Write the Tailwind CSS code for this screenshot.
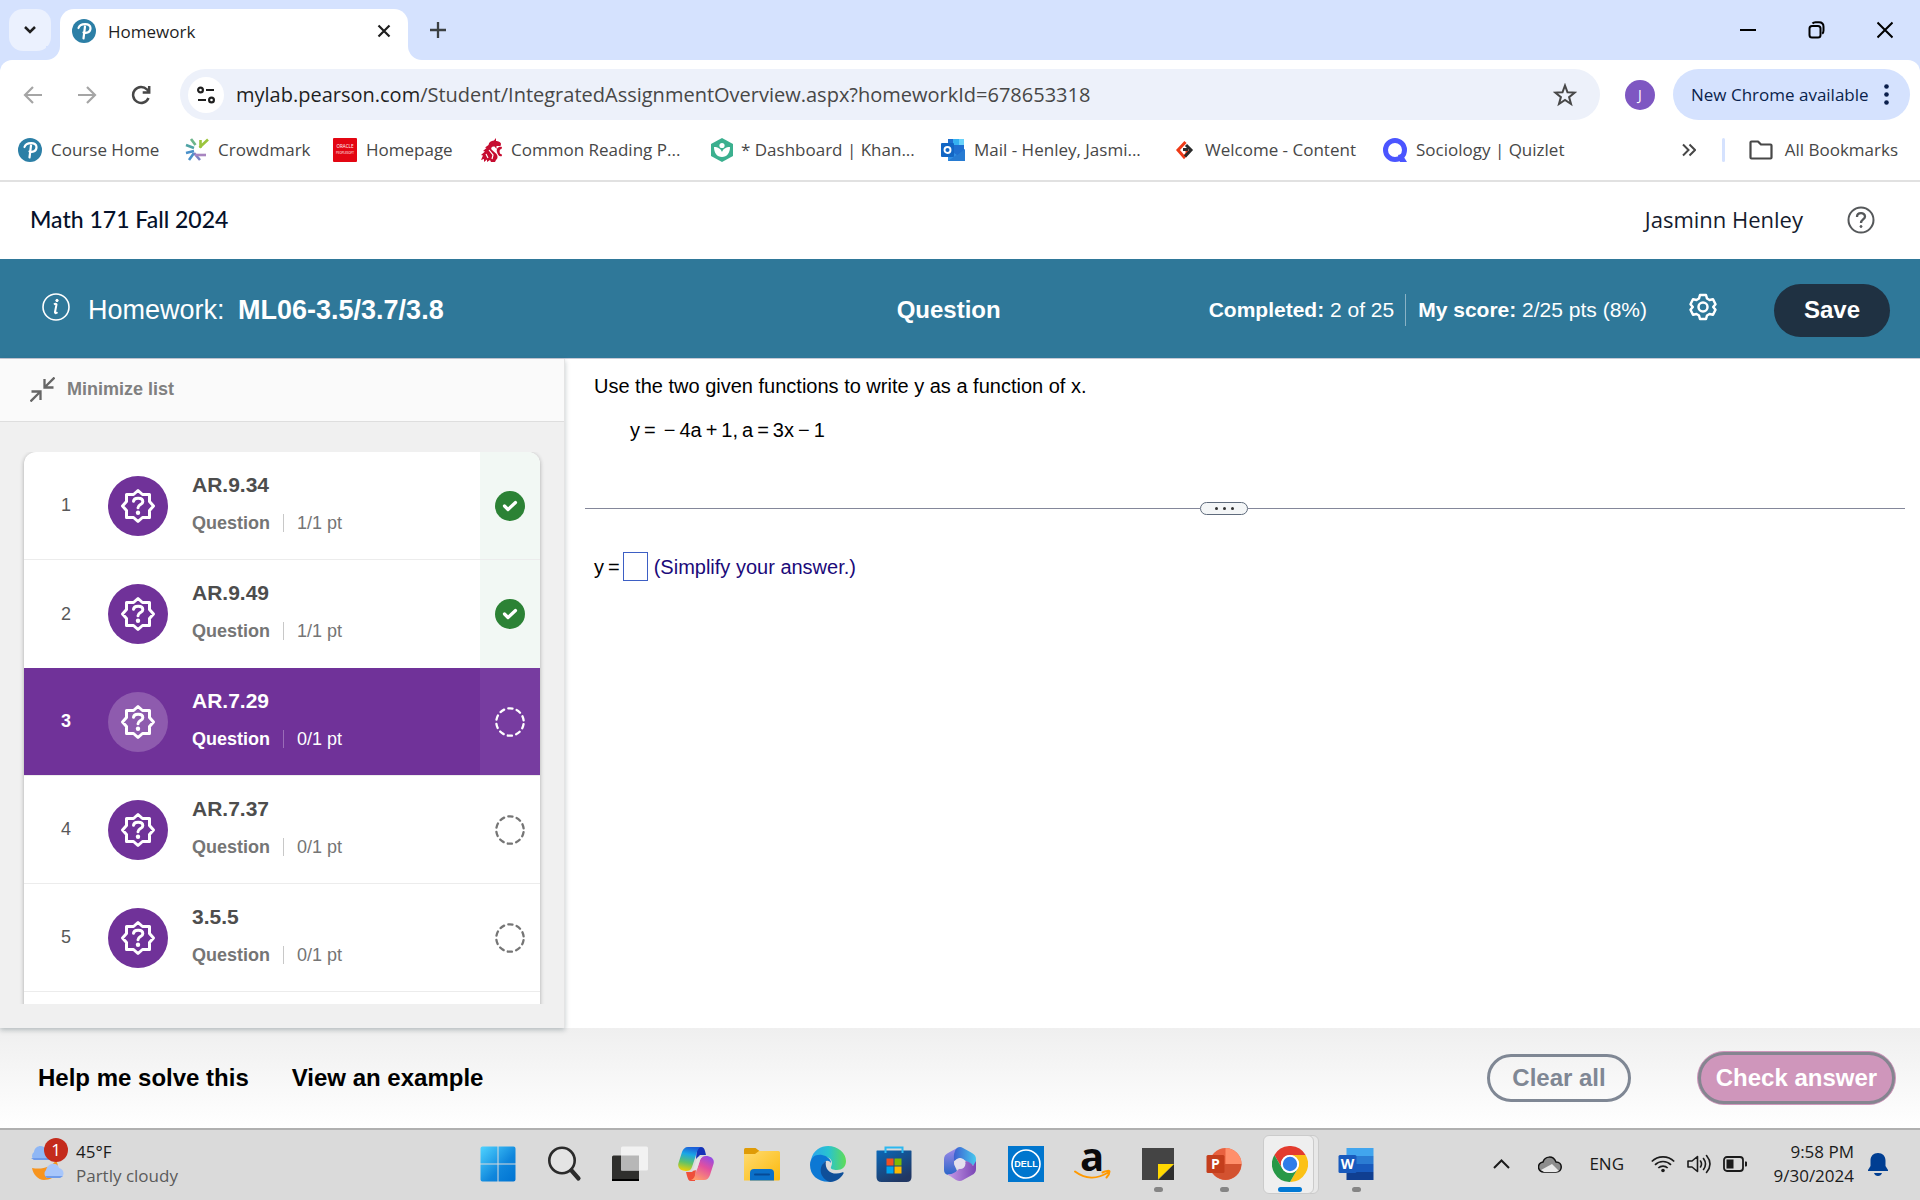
<!DOCTYPE html>
<html lang="en">
<head>
  <meta charset="UTF-8">
  <meta name="viewport" content="width=device-width, initial-scale=1.0">
  <title>Homework</title>
  <script src="https://cdn.jsdelivr.net/npm/@tailwindcss/browser@4"></script>
</head>
<body class="h-screen flex flex-col overflow-hidden bg-white font-['Liberation_Sans',Arial,sans-serif]">

  <!-- Shared icons -->
  <svg class="hidden">
    <symbol id="pearson" viewBox="0 0 24 24">
      <circle cx="12" cy="12" r="12" fill="#2c7fa6"/>
      <path d="M6.500 9C8 4 18.500 3.500 18.500 9c0 4.500-4 5.500-7 4.500M13 7.500 11.500 19.500" fill="none" stroke="#fff" stroke-width="2.200" stroke-linecap="round"/>
    </symbol>
    <symbol id="seal" viewBox="-18 -18 36 36">
      <path d="M0-15.500 4.500-11.500H11.500V-4.500L15.500 0 11.500 4.500V11.500H4.500L0 15.500-4.500 11.500H-11.500V4.500L-15.500 0-11.500-4.500V-11.500H-4.500Z" fill="none" stroke="currentColor" stroke-width="3" stroke-linejoin="round"/>
      <path d="M-4.500-4.800C-4-8.800 4.800-8.800 4.800-4.300 4.800-1.300 0-1.500 0 1.800" fill="none" stroke="currentColor" stroke-width="3" stroke-linecap="round"/>
      <circle cy="6.800" r="2.200" fill="currentColor"/>
    </symbol>
    <symbol id="done" viewBox="0 0 30 30">
      <circle cx="15" cy="15" r="15" fill="#2c8235"/>
      <path d="M9.500 15 13 18.500 20.500 11.500" fill="none" stroke="#fff" stroke-width="3.200" stroke-linecap="round" stroke-linejoin="round"/>
    </symbol>
    <symbol id="todo" viewBox="0 0 30 30">
      <circle cx="15" cy="15" r="13.700" fill="none" stroke="currentColor" stroke-width="2.300" stroke-linecap="round" stroke-dasharray="4.300 4.308" stroke-dashoffset="-2.150"/>
    </symbol>
  </svg>

  <!-- Browser chrome -->
  <header class="bg-[#d5e2fe] font-['Open_Sans','Noto_Sans',sans-serif]">
    <div class="h-[60px] flex items-end pl-[9px]">
      <button aria-label="Search tabs" class="size-[42px] mb-[9px] rounded-[14px] bg-[#ebf1fe] flex items-center justify-center">
        <svg class="size-4" viewBox="0 0 16 16" fill="none" stroke="#1f1f1f" stroke-width="2.500"><path d="m3 5 5 5 5-5"/></svg>
      </button>
      <div class="relative ml-[9px] w-[348px] h-[51px] rounded-t-[14px] bg-white flex items-center pl-3 pr-[17px] pb-2">
        <span class="absolute bottom-0 -left-[14px] size-[14px] bg-white"><span class="block size-full bg-[#d5e2fe] rounded-br-[14px]"></span></span>
        <span class="absolute bottom-0 -right-[14px] size-[14px] bg-white"><span class="block size-full bg-[#d5e2fe] rounded-bl-[14px]"></span></span>
        <svg class="size-6"><use href="#pearson"/></svg>
        <span class="ml-3 pt-[2px] text-[17px] text-[#1f1f1f]">Homework</span>
        <button aria-label="Close tab" class="ml-auto"><svg class="size-[14px]" viewBox="0 0 14 14" stroke="#1f1f1f" stroke-width="2.200"><path d="m1.500 1.500 11 11m0-11-11 11"/></svg></button>
      </div>
      <button aria-label="New tab" class="ml-[21px] mb-[21px]"><svg class="size-[18px]" viewBox="0 0 18 18" stroke="#3c4043" stroke-width="2.300"><path d="M9 1v16M1 9h16"/></svg></button>
      <div class="ml-auto mr-[27px] mb-[21px] flex items-center gap-[52px]">
        <button aria-label="Minimize"><svg class="w-4 h-[18px]" viewBox="0 0 16 18" stroke="#000" stroke-width="2"><path d="M0 9h16"/></svg></button>
        <button aria-label="Restore"><svg class="w-[17px] h-[18px]" viewBox="0 0 17 18" fill="none" stroke="#000" stroke-width="2"><rect x="1.500" y="5" width="11" height="11.500" rx="2.500"/><path d="M4.500 2.500c1-1.200 2-1.300 3-1.300h3.500c3 0 4.500 1.500 4.500 4.500v3.800c0 1.500-.300 2.500-1.300 3.300"/></svg></button>
        <button aria-label="Close"><svg class="w-4 h-[18px]" viewBox="0 0 16 18" stroke="#000" stroke-width="2"><path d="m.500 1.500 15 15m0-15-15 15"/></svg></button>
      </div>
    </div>

    <div class="bg-white rounded-t-xl pt-[9px] border-b-2 border-[#e1e1e1]">
      <div class="flex items-center h-[51px] pl-[23px] pr-[10px]">
        <button aria-label="Back"><svg class="size-5" viewBox="0 0 20 20" fill="none" stroke="#a5a5a5" stroke-width="2.200"><path d="M19 10H2m8-8-8 8 8 8"/></svg></button>
        <button aria-label="Forward" class="ml-[34px]"><svg class="size-5" viewBox="0 0 20 20" fill="none" stroke="#a5a5a5" stroke-width="2.200"><path d="M1 10h17m-8-8 8 8-8 8"/></svg></button>
        <button aria-label="Reload" class="ml-[34px]"><svg class="size-5" viewBox="0 0 20 20" fill="none" stroke="#474747" stroke-width="2.500"><path d="M17.500 13A8 8 0 1 1 16 4.500l2 2M18.200 1v6.500h-6.500"/></svg></button>
        <div class="ml-[29px] flex-1 h-full rounded-full bg-[#edf1fa] flex items-center pl-2 pr-[23px]">
          <button aria-label="View site information" class="size-9 rounded-full bg-white flex items-center justify-center">
            <svg class="size-[18px]" viewBox="0 0 18 18" fill="none" stroke="#1f1f1f" stroke-width="2.200"><circle cx="3.500" cy="4" r="2.400"/><path d="M9 4h8M1 14h8"/><circle cx="14.500" cy="14" r="2.400"/></svg>
          </button>
          <span class="ml-3 text-[20px] text-[#474747]"><span class="text-[#1f1f1f]">mylab.pearson.com</span>/Student/IntegratedAssignmentOverview.aspx?homeworkId=678653318</span>
          <button aria-label="Bookmark this tab" class="ml-auto"><svg class="size-6" viewBox="0 0 24 24" fill="none" stroke="#474747" stroke-width="2"><path d="m12 2.500 2.500 6.800 7.200.300-5.600 4.500 1.900 6.900-6-4-6 4 1.900-6.900-5.600-4.500 7.200-.300Z"/></svg></button>
        </div>
        <button aria-label="Profile" class="ml-[25px] size-[30px] rounded-full bg-[#7e57c2] text-white text-sm">J</button>
        <button class="ml-[18px] w-[237px] h-full rounded-full bg-[#d5e2fe] flex items-center justify-between pl-[18px] pr-[21px] text-[17px] text-[#0a1f4c] whitespace-nowrap">New Chrome available
          <svg class="w-[5px] h-[21px]" viewBox="0 0 5 21" fill="#0a1f4c"><circle cx="2.500" cy="2.500" r="2.300"/><circle cx="2.500" cy="10.500" r="2.300"/><circle cx="2.500" cy="18.500" r="2.300"/></svg>
        </button>
      </div>

      <nav class="flex items-center h-[60px] pl-[18px] pr-[22px] text-[17px] text-[#474747] whitespace-nowrap">
        <a href="#" class="w-[167px] flex items-center gap-[9px]"><svg class="size-6"><use href="#pearson"/></svg>Course Home</a>
        <a href="#" class="w-[148px] flex items-center gap-[9px]">
          <svg class="size-6" viewBox="0 0 24 24" fill="none" stroke-width="2.600"><path d="m6 1 4.500 6" stroke="#6cb58a"/><path d="M14.500 9.500 23 1.500M15.500 10V2" stroke="#9bc53d"/><path d="m1 7 8 3" stroke="#4fa3a5"/><path d="m1 15 8-2M4 22l5-7" stroke="#4a90c9"/><path d="m9 15 6 7" stroke="#7b7fc4"/><path d="M10 17h11" stroke="#a885c0"/></svg>Crowdmark</a>
        <a href="#" class="w-[147px] flex items-center gap-[9px]">
          <svg class="size-6" viewBox="0 0 24 24"><rect width="24" height="24" rx="1" fill="#e30613"/><text x="12" y="10" font-size="4.500" fill="#fff" text-anchor="middle">ORACLE</text><text x="12" y="16" font-size="3" fill="#fff" text-anchor="middle">PEOPLESOFT</text></svg>Homepage</a>
        <a href="#" class="w-[230px] flex items-center gap-[7px]">
          <svg class="size-6" viewBox="0 0 24 24" fill="#c60c30"><path d="M16 0 14 2.500C11 3 9 4 8.500 7L5 9.500l1.500.500L3 13l2 .500L1 17l2 .500L1 22l3-1v3l3-2.500V24l3-2 1 2h4l1-2c2-1.500 2-4 .500-6l-5-4.500c-1-2 .500-3.500 3-3l2 2.500V8h4l.500-2C21 4 18 3 16 3Z"/><path d="M22 9c-4-1-6 2-5 5s2 5 5 4l-.500-2c-2 1-3-5 0-5Z"/><path d="m6 16 2 4m1-8 4 5-1 4" stroke="#fff" stroke-width="1.200" fill="none"/></svg>Common Reading P...</a>
        <a href="#" class="w-[231px] flex items-center gap-[7px]">
          <svg class="size-6" viewBox="0 0 24 24"><path d="M12 0 23 6v12l-11 6L1 18V6Z" fill="#3bb08f"/><circle cx="12" cy="7.500" r="2.600" fill="#fff"/><path d="M4 9c4 0 7 2 8 5 1-3 4-5 8-5 0 6-3 10-8 10S4 15 4 9Z" fill="#fff"/></svg>* Dashboard | Khan...</a>
        <a href="#" class="w-[231px] flex items-center gap-[9px]">
          <svg class="size-6" viewBox="0 0 24 24"><path d="M7 1h16v20H7Z" fill="#1f6fd0"/><path d="M12 1h6v6h-6Z" fill="#35b1f1"/><path d="M18 1h5v6h-5Z" fill="#69d2fa"/><path d="M7 11 16 17l8-6v12H7Z" fill="#2f8fe6"/><path d="m7 23 17-12v12Z" fill="#1b5cb3" opacity=".4"/><rect y="5" width="13" height="14" rx="1" fill="#1266c4"/><circle cx="6.500" cy="12" r="3" fill="none" stroke="#fff" stroke-width="1.900"/></svg>Mail - Henley, Jasmi...</a>
        <a href="#" class="w-[211px] flex items-center gap-[9px]">
          <svg class="size-6" viewBox="0 0 24 24" fill="none" stroke-width="3"><path d="M13.500 4 6 12l6 7 3-3.500V11" stroke="#ee3a17"/><path d="m14 7 5 5-6 6.500M11 11.500h5" stroke="#2b2b2b"/></svg>Welcome - Content</a>
        <a href="#" class="flex items-center gap-[9px]">
          <svg class="size-6" viewBox="0 0 24 24"><circle cx="12" cy="12" r="9.500" fill="none" stroke="#4b55ff" stroke-width="5"/><path d="m15 17 4-1 5 8h-7Z" fill="#4b55ff"/></svg>Sociology | Quizlet</a>
        <button aria-label="More bookmarks" class="ml-auto"><svg class="size-[14px]" viewBox="0 0 14 14" fill="none" stroke="#474747" stroke-width="2"><path d="m1 1.500 5.500 5.500L1 12.500M7.500 1.500 13 7l-5.500 5.500"/></svg></button>
        <span class="ml-[26px] w-[3px] h-6 rounded bg-[#d5e2fe]"></span>
        <button class="ml-6 flex items-center gap-3"><svg class="size-6" viewBox="0 0 24 24" fill="none" stroke="#474747" stroke-width="2.200" stroke-linejoin="round"><path d="M1.500 4.500q0-1 1-1h6.500l3 3h9.500q1 0 1 1V19.500q0 1-1 1h-19q-1 0-1-1Z"/></svg>All Bookmarks</button>
      </nav>
    </div>
  </header>

  <!-- Course bar -->
  <div class="h-[77px] shrink-0 flex items-center pl-[30px] pr-[45px] pb-[2px]">
    <h1 class="font-['Lato',sans-serif] text-[23px] font-medium text-[#05112a]">Math 171 Fall 2024</h1>
    <span class="ml-auto font-['Open_Sans','Noto_Sans',sans-serif] text-[22px] text-[#151b2e]">Jasminn Henley</span>
    <button aria-label="Help" class="ml-[44px]"><svg class="size-7" viewBox="0 0 28 28" fill="none" stroke="#55585a" stroke-width="2"><circle cx="14" cy="14" r="12.500"/><path d="M10 11c0-5 8-5 8-.500 0 3-4 3-4 6.500" stroke-width="2.300"/><circle cx="14" cy="20.500" r="1" fill="#55585a" stroke-width="1"/></svg></button>
  </div>

  <!-- Assignment bar -->
  <div class="h-[100px] shrink-0 flex items-center bg-[#2f7899] border-b border-[#c7c9d6] pt-[3px] pl-[42px] pr-[30px] text-white">
    <svg class="size-7 mb-[6px]" viewBox="0 0 28 28" fill="none" stroke="#fff" stroke-width="1.600"><circle cx="14" cy="14" r="13"/><path d="M12 11.500c1-.800 2.500-1 2.500 0L13 19c-.200 1.500 1 1.500 2.500.300" stroke-width="2"/><circle cx="15" cy="7.500" r="1.200" fill="#fff" stroke-width="1"/></svg>
    <h2 class="ml-[18px] text-[27px]">Homework: <b class="ml-[6px]">ML06-3.5/3.7/3.8</b></h2>
    <h3 class="ml-auto text-[24px] font-bold">Question</h3>
    <div class="ml-[208px] flex items-center text-[21px]">
      <span class="pr-[11px] border-r border-[#8ab2c5]"><b>Completed:</b> 2 of 25</span>
      <span class="pl-3"><b>My score:</b> 2/25 pts (8%)</span>
    </div>
    <button aria-label="Settings" class="ml-[42px] mb-[6px]"><svg class="size-7" viewBox="0 0 28 28" fill="none" stroke="#fff" stroke-width="2.500" stroke-linejoin="round"><path d="M11 2h6l1 3.500 2.500 1.500 3.500-.800 2.500 5-2.300 2.800 2.300 2.800-2.500 5-3.500-.800-2.500 1.500-1 3.500h-6l-1-3.500-2.500-1.500-3.500.800-2.500-5L3.800 14 1.500 11.200l2.500-5 3.500.800L10 5.500Z"/><circle cx="14" cy="14" r="4.500"/></svg></button>
    <button class="ml-[57px] w-[116px] h-[53px] rounded-full bg-[#1f3142] text-[24px] font-bold">Save</button>
  </div>

  <main class="flex-1 min-h-0 flex">
    <!-- Question list -->
    <aside class="relative z-10 w-[565px] shrink-0 flex flex-col bg-[#f0f0f0] border-r border-[#e4e4e4] shadow-[0_2px_5px_rgba(0,30,40,0.25)]">
      <button class="h-[63px] shrink-0 flex items-center gap-3 pl-[30px] pb-[2px] bg-[#fafafa] border-b border-[#dedede] text-[18px] font-bold text-[#808080]">
        <svg class="size-[25px]" viewBox="0 0 25 25" fill="none" stroke="#666" stroke-width="2.300"><path d="M24.500.500 15 10M14.500 2v8.500h9M.500 24.500 10 15M1.500 14.500h9V23"/></svg>
        Minimize list
      </button>
      <div class="flex-1 min-h-0 mt-[30px] mb-6 px-6 overflow-hidden">
        <ol class="bg-white rounded-t-[12px] shadow-[0_1px_4px_rgba(0,0,0,0.3)] overflow-hidden text-[18px] text-[#757575]">
          <li class="h-[108px] flex items-stretch border-b border-[#ececec]">
            <span class="w-[84px] self-center text-center text-[#595959]">1</span>
            <span class="size-[60px] self-center rounded-full bg-[#703299] text-white flex items-center justify-center"><svg class="size-9"><use href="#seal"/></svg></span>
            <div class="ml-6 pb-1 flex-1 flex flex-col justify-center gap-[10px]">
              <a href="#" class="text-[21px] leading-7 font-bold text-[#4d4d4d]">AR.9.34</a>
              <p class="flex items-center leading-7"><b>Question</b><span class="mx-[13px] w-px h-[18px] bg-[#c8c8c8]"></span>1/1 pt</p>
            </div>
            <span class="w-[60px] bg-[#f2f8f4] flex items-center justify-center"><svg class="size-[30px]"><use href="#done"/></svg></span>
          </li>
          <li class="h-[108px] flex items-stretch">
            <span class="w-[84px] self-center text-center text-[#595959]">2</span>
            <span class="size-[60px] self-center rounded-full bg-[#703299] text-white flex items-center justify-center"><svg class="size-9"><use href="#seal"/></svg></span>
            <div class="ml-6 pb-1 flex-1 flex flex-col justify-center gap-[10px]">
              <a href="#" class="text-[21px] leading-7 font-bold text-[#4d4d4d]">AR.9.49</a>
              <p class="flex items-center leading-7"><b>Question</b><span class="mx-[13px] w-px h-[18px] bg-[#c8c8c8]"></span>1/1 pt</p>
            </div>
            <span class="w-[60px] bg-[#f2f8f4] flex items-center justify-center"><svg class="size-[30px]"><use href="#done"/></svg></span>
          </li>
          <li class="h-[108px] flex items-stretch bg-[#703299] text-white border-b border-[#ececec]">
            <span class="w-[84px] self-center text-center font-bold">3</span>
            <span class="size-[60px] self-center rounded-full bg-[#8e5bae] flex items-center justify-center"><svg class="size-9"><use href="#seal"/></svg></span>
            <div class="ml-6 pb-1 flex-1 flex flex-col justify-center gap-[10px]">
              <a href="#" class="text-[21px] leading-7 font-bold">AR.7.29</a>
              <p class="flex items-center leading-7"><b>Question</b><span class="mx-[13px] w-px h-[18px] bg-[#9a6cb8]"></span>0/1 pt</p>
            </div>
            <span class="w-[60px] bg-[#773ca0] flex items-center justify-center"><svg class="size-[30px]"><use href="#todo"/></svg></span>
          </li>
          <li class="h-[108px] flex items-stretch border-b border-[#ececec]">
            <span class="w-[84px] self-center text-center text-[#595959]">4</span>
            <span class="size-[60px] self-center rounded-full bg-[#703299] text-white flex items-center justify-center"><svg class="size-9"><use href="#seal"/></svg></span>
            <div class="ml-6 pb-1 flex-1 flex flex-col justify-center gap-[10px]">
              <a href="#" class="text-[21px] leading-7 font-bold text-[#4d4d4d]">AR.7.37</a>
              <p class="flex items-center leading-7"><b>Question</b><span class="mx-[13px] w-px h-[18px] bg-[#c8c8c8]"></span>0/1 pt</p>
            </div>
            <span class="w-[60px] flex items-center justify-center"><svg class="size-[30px]"><use href="#todo"/></svg></span>
          </li>
          <li class="h-[108px] flex items-stretch border-b border-[#ececec]">
            <span class="w-[84px] self-center text-center text-[#595959]">5</span>
            <span class="size-[60px] self-center rounded-full bg-[#703299] text-white flex items-center justify-center"><svg class="size-9"><use href="#seal"/></svg></span>
            <div class="ml-6 pb-1 flex-1 flex flex-col justify-center gap-[10px]">
              <a href="#" class="text-[21px] leading-7 font-bold text-[#4d4d4d]">3.5.5</a>
              <p class="flex items-center leading-7"><b>Question</b><span class="mx-[13px] w-px h-[18px] bg-[#c8c8c8]"></span>0/1 pt</p>
            </div>
            <span class="w-[60px] flex items-center justify-center"><svg class="size-[30px]"><use href="#todo"/></svg></span>
          </li>
          <li class="h-[108px]"></li>
        </ol>
      </div>
    </aside>

    <!-- Exercise -->
    <section class="flex-1 pl-5 pr-[15px] pt-[13px] text-[20px] leading-7 text-black">
      <p class="pl-[9px]">Use the two given functions to write y as a function of x.</p>
      <p class="mt-4 pl-[45px] flex gap-1"><span>y</span><span>=</span><span class="ml-1">−</span><span>4a</span><span>+</span><span>1,</span><span>a</span><span>=</span><span>3x</span><span>−</span><span>1</span></p>
      <div class="mt-[58px] flex items-center">
        <span class="flex-1 h-px bg-[#84879a]"></span>
        <button aria-label="Resize panels" class="w-12 h-[13px] rounded-full border border-[#5f6b7c] bg-[#f4f6f7] flex items-center justify-center gap-[5px]"><span class="size-[3px] rounded-full bg-[#333]"></span><span class="size-[3px] rounded-full bg-[#333]"></span><span class="size-[3px] rounded-full bg-[#333]"></span></button>
        <span class="w-[657px] h-px bg-[#84879a]"></span>
      </div>
      <p class="mt-[37px] pl-[9px] flex items-center">
        <label for="answer" class="flex gap-1"><span>y</span><span>=</span></label>
        <input id="answer" type="text" class="ml-[3px] w-[25px] h-[29px] border border-[#3d5fc4] bg-white outline-none">
        <span class="ml-[6px] text-[#1b0a7a]">(Simplify your answer.)</span>
      </p>
    </section>
  </main>

  <footer class="h-[100px] shrink-0 flex items-center pl-[38px] pr-6 bg-linear-to-b from-[#efefef] to-white text-[24px] font-bold text-black">
    <button>Help me solve this</button>
    <button class="ml-[43px]">View an example</button>
    <button class="ml-auto w-[144px] h-12 rounded-full border-3 border-[#7f8794] text-[#7f8794]">Clear all</button>
    <button class="ml-[66px] w-[199px] h-[54px] rounded-full bg-[#cf96bb] border border-[#cf96bb]"><span class="flex size-full items-center justify-center rounded-full border-3 border-[#858590] text-white whitespace-nowrap">Check answer</span></button>
  </footer>

  <!-- Taskbar -->
  <div class="h-[72px] shrink-0 flex items-stretch bg-[#dadada] border-t-2 border-[#b0b0b0] pr-8 font-['Open_Sans','Noto_Sans',sans-serif] text-[17px] leading-6 text-[#1b1b1b]">
    <button class="w-[465px] pl-[28px] flex items-center text-left">
      <svg class="w-[40px] h-[42px] mb-3" viewBox="0 0 40 42">
        <path d="M4 30c10 2 20-1 24-8 5 9 0 20-12 20C10 42 5 36 4 30Z" fill="#f7941e"/>
        <path d="M6 22a5 5 0 0 1 0-8c1-7 10-8 12-2 6 1 6 10 0 10Z" fill="#8fb7f5"/>
        <path d="M19 40a5 5 0 0 1-1-8c2-8 12-8 13-2 6 1 6 10 0 10Z" fill="#a7c6fb"/>
        <path d="M3 20h18v2H6ZM17 38h18l-3 2H19Z" fill="#6f9bea"/>
        <circle cx="28" cy="12" r="12" fill="#c42b1c"/><text x="28" y="18" font-size="17" fill="#fff" text-anchor="middle">1</text>
      </svg>
      <span class="ml-2 mb-[3px] block">45°F<br><span class="text-[#5b5b5b]">Partly cloudy</span></span>
    </button>

    <nav class="flex">
      <button aria-label="Start" class="w-[66px] flex justify-center pt-[16px]"><svg class="size-9" viewBox="0 0 36 36"><defs><linearGradient id="win" x1="0" y1="0" x2="1" y2="1"><stop stop-color="#4fd3ff"/><stop offset=".6" stop-color="#0f86dc"/><stop offset="1" stop-color="#0073d2"/></linearGradient></defs><path d="M.500 2.500q0-2 2-2h15v17H.500ZM18.500.500h15q2 0 2 2v15h-17ZM.500 18.500h17v17h-15q-2 0-2-2ZM18.500 18.500h17v15q0 2-2 2h-15Z" fill="url(#win)"/></svg></button>
      <button aria-label="Search" class="w-[66px] flex justify-center pt-[16px]"><svg class="size-9" viewBox="0 0 36 36" fill="none" stroke="#2b2b2b"><circle cx="16" cy="14.500" r="12.700" stroke-width="2.600" fill="#e4e4e4"/><path d="m25.500 24.500 7 8" stroke-width="4.200" stroke-linecap="round"/></svg></button>
      <button aria-label="Task view" class="w-[66px] flex justify-center pt-[16px]"><svg class="size-9" viewBox="0 0 36 36"><rect y="9.500" width="27" height="25" rx="1.500" fill="#2f2f2d"/><path d="M0 33h27v2H0Z" fill="#000"/><rect x="9" y=".500" width="27" height="24" rx="1.500" fill="#f2f2f2"/><path d="M9 9.500h18v15H9Z" fill="#b7b7b7"/></svg></button>
      <button aria-label="Copilot" class="w-[66px] flex justify-center pt-[16px]"><svg class="size-9" viewBox="0 0 36 36"><defs><linearGradient id="cpa" x1=".5" y1="0" x2=".3" y2="1"><stop stop-color="#1c5fd8"/><stop offset=".3" stop-color="#1aa7e6"/><stop offset=".65" stop-color="#5fc26a"/><stop offset="1" stop-color="#f3d000"/></linearGradient><linearGradient id="cpb" x1=".8" y1="0" x2=".3" y2="1"><stop stop-color="#8f4be8"/><stop offset=".45" stop-color="#e2509f"/><stop offset="1" stop-color="#ff9a6b"/></linearGradient></defs><path d="M19 1h4c2.500 0 3 1 4 4l1 4h-6l-4 4Z" fill="#1533b8"/><path d="M17 35h-4c-2.500 0-3-2-4-5l-1-4h6l4-4Z" fill="#ef4f3a"/><path d="M10 1h13c-3 1-4 4-5 8l-4 12c-1 3-3 4-6 4-5 0-9-3-7.500-8L4 6c1-3 3-5 6-5Z" fill="url(#cpa)"/><path d="M26 34H13c3-1 4-4 5-8l4-12c1-3 3-4 6-4 5 0 9 3 7.500 8L32 29c-1 3-3 5-6 5Z" fill="url(#cpb)"/><path d="M20.500 11h4c-2 1-2.500 3-3 5l-2 6c-.500 1.500-1.500 2.500-3 2.500h-3c2-1 2.500-3 3-4.500l2-6c.500-1.500 1-2.500 2-3Z" fill="#e6e2e4"/></svg></button>
      <button aria-label="File Explorer" class="w-[66px] flex justify-center pt-[16px]"><svg class="size-9" viewBox="0 0 36 36"><defs><linearGradient id="fol" x1="0" y1="0" x2="1" y2="1"><stop stop-color="#ffdb70"/><stop offset="1" stop-color="#fbb90c"/></linearGradient></defs><path d="M0 3.500q0-1.500 1.500-1.500h10l4 3v6H0Z" fill="#df9b06"/><path d="M0 8h11l4-3h19.500q1.500 0 1.500 1.500v26.500q0 1.500-1.500 1.500H0Z" fill="url(#fol)"/><path d="M6 34.500V27q0-4 4-4h16q4 0 4 4v7.500Z" fill="#0a70c9"/><path d="M11 28.500h14" stroke="#064a96" stroke-width="2" stroke-linecap="round"/></svg></button>
      <button aria-label="Edge" class="w-[66px] flex justify-center pt-[16px]"><svg class="size-9" viewBox="0 0 36 36"><defs><linearGradient id="ed"><stop stop-color="#2aa5ee"/><stop offset=".5" stop-color="#29c3cf"/><stop offset="1" stop-color="#5fdc56"/></linearGradient></defs><path d="M1 14C3 4 11 0 18 0c10 0 18 7 18 15 0 6-4 9-9 9-4 0-7-1-6-3 3-6-1-10-6-10-6 0-11 1-14 3Z" fill="url(#ed)"/><path d="M0 19c0-8 6-11 12-10 5 1 9 4 9 8-3-4-7-2-8 2-2 7 3 15 11 16C11 38 0 31 0 19Z" fill="#0c78d4"/><path d="M16 15c-8 5-7 17 4 21 6 0 11-4 13.500-8.500.500-1-.500-1.500-1.500-1C23 30 14 25 16 15Z" fill="#0f4f99"/></svg></button>
      <button aria-label="Microsoft Store" class="w-[66px] flex justify-center pt-[16px]"><svg class="size-9" viewBox="0 0 36 36"><defs><linearGradient id="st" x1="0" y1="0" x2=".6" y2="1"><stop stop-color="#0b68b8"/><stop offset="1" stop-color="#213763"/></linearGradient></defs><path d="M.500 5q0-.500.500-.500h34q.500 0 .500.500V31q0 5-5 5h-25q-5 0-5-5Z" fill="url(#st)"/><path d="M9.500 7V1.500h17V7" fill="none" stroke="#2cb8f0" stroke-width="2"/><path d="M10.500 12.500h7v7h-7Z" fill="#f25022"/><path d="M18.500 12.500h7v7h-7Z" fill="#7fba00"/><path d="M10.500 20.500h7v7h-7Z" fill="#00a4ef"/><path d="M18.500 20.500h7v7h-7Z" fill="#ffb900"/></svg></button>
      <button aria-label="Microsoft 365" class="w-[66px] flex justify-center pt-[16px]"><svg class="size-9" viewBox="0 0 36 36"><defs><linearGradient id="ma" x1="0" y1="0" x2="0" y2="1"><stop stop-color="#a48bea"/><stop offset="1" stop-color="#2a66c8"/></linearGradient><linearGradient id="mb"><stop stop-color="#3d5fd0"/><stop offset="1" stop-color="#48c8ee"/></linearGradient><linearGradient id="mc"><stop stop-color="#c79be8"/><stop offset="1" stop-color="#7a45b5"/></linearGradient></defs><path d="M17 1 6 7q-4 2-4 6v11q0 4 4 5 6 1 9-4l-3-7V10q0-6 5-9Z" fill="url(#ma)"/><path d="M15 2q3-2 6 0l9 5q4 2 4 6v8l-10-6-6-3-6 3q-1-10 3-13Z" fill="url(#mb)"/><path d="M34 15v8q0 4-4 6l-9 5q-3 2-7 0l-9-6q6 1 11-4l8-9q6 2 7 5Z" fill="url(#mc)"/><circle cx="18" cy="17.500" r="5.500" fill="#e4e0ee"/></svg></button>
      <button aria-label="Dell" class="w-[66px] flex justify-center pt-[16px]"><svg class="size-9" viewBox="0 0 36 36"><path d="M0 0h36v36H0Z" fill="#0076ce"/><circle cx="18" cy="18" r="14" fill="none" stroke="#fff" stroke-width="1.600"/><text x="18" y="21" font-size="9" font-weight="bold" fill="#fff" text-anchor="middle" font-family="Liberation Sans">DELL</text></svg></button>
      <button aria-label="Amazon" class="w-[66px] flex justify-center pt-[16px]"><svg class="size-9 overflow-visible" viewBox="0 0 36 36"><text x="18" y="25" font-size="40" font-weight="bold" fill="#0a0a0a" text-anchor="middle" font-family="Open Sans">a</text><path d="M1 25.500c10 7.500 22 8 33 1M28.500 26.500c4-2 7-2 7-1s-1 4-3 6" fill="none" stroke="#f90" stroke-width="2" stroke-linecap="round"/></svg></button>
      <button aria-label="Sticky Notes" class="w-[66px] flex flex-col items-center pt-[16px]"><svg class="size-9" viewBox="0 0 36 36"><path d="M2 2h32v16L18 34H2Z" fill="#444"/><path d="M34 18v16H18Z" fill="#2e2e2e"/><path d="M18 18h16L18 33.500Z" fill="#ffd800"/></svg><span class="mt-[5px] w-[9px] h-[5px] rounded-full bg-[#858585]"></span></button>
      <button aria-label="PowerPoint" class="w-[66px] flex flex-col items-center pt-[16px]"><svg class="size-9" viewBox="0 0 36 36"><circle cx="19.500" cy="18" r="16" fill="#e8613f"/><path d="M19.500 2a16 16 0 0 1 16 16h-16Z" fill="#ff8f6b"/><path d="M35.500 18a16 16 0 0 1-29 9L19.500 18Z" fill="#d35230"/><rect x=".500" y="9" width="18" height="18" rx="1.500" fill="#c43e1c"/><text x="9.500" y="23" font-size="14" font-weight="bold" fill="#fff" text-anchor="middle">P</text></svg><span class="mt-[5px] w-[9px] h-[5px] rounded-full bg-[#858585]"></span></button>
      <button aria-label="Chrome" class="relative w-[66px] flex flex-col items-center pt-[16px]">
        <span class="absolute left-[10px] top-[5px] w-[52px] h-[59px] rounded-md bg-[#e8e8e8] border border-[#cbcbcb]"></span>
        <span class="absolute left-[6px] top-[5px] w-[51px] h-[59px] rounded-md bg-[#efefef] border border-[#cbcbcb]"></span>
        <svg class="relative size-9" viewBox="0 0 36 36"><path d="M2.400 9A18 18 0 0 1 33.600 9H18A9 9 0 0 0 10.200 22.500Z" fill="#e33b2e"/><path d="M2.400 9A18 18 0 0 1 33.600 9H18A9 9 0 0 0 10.200 22.500Z" fill="#fbc116" transform="rotate(120 18 18)"/><path d="M2.400 9A18 18 0 0 1 33.600 9H18A9 9 0 0 0 10.200 22.500Z" fill="#279847" transform="rotate(240 18 18)"/><circle cx="18" cy="18" r="9" fill="#fff"/><circle cx="18" cy="18" r="7.200" fill="#2f7de9"/></svg>
        <span class="relative mt-[5px] w-6 h-[5px] rounded-full bg-[#0078d4]"></span>
      </button>
      <button aria-label="Word" class="w-[66px] flex flex-col items-center pt-[16px]"><svg class="size-9" viewBox="0 0 36 36"><path d="M8.500 2h27v8h-27Z" fill="#41a5ee"/><path d="M8.500 10h27v8h-27Z" fill="#2b7cd3"/><path d="M8.500 18h27v8h-27Z" fill="#185abd"/><path d="M8.500 26h27v8h-27Z" fill="#103f91"/><rect x=".500" y="9" width="18" height="18" rx="1.500" fill="#185abd"/><text x="9.500" y="23" font-size="14" font-weight="bold" fill="#fff" text-anchor="middle">W</text></svg><span class="mt-[5px] w-[9px] h-[5px] rounded-full bg-[#858585]"></span></button>
    </nav>

    <div class="ml-auto flex items-center pb-[2px]">
      <button aria-label="Show hidden icons"><svg class="w-[17px] h-[10px]" viewBox="0 0 17 10" fill="none" stroke="#1b1b1b" stroke-width="2"><path d="m1 9 7.500-7.500L16 9"/></svg></button>
      <svg class="ml-[28px] w-6 h-[17px]" viewBox="0 0 24 17"><path d="M6 16a5 5 0 0 1-1-10C7 0 15-1 18 6c7 0 7 10 0 10Z" fill="#8d8d8d" stroke="#111" stroke-width="1.500"/><path d="M3 14 14 8l7 7-3 1H6Z" fill="#e9e9e9"/></svg>
      <span class="ml-[27px] text-[17px]">ENG</span>
      <svg class="ml-[27px] w-6 h-[18px]" viewBox="0 0 24 18" fill="none" stroke="#1b1b1b" stroke-width="1.700"><path d="M.800 6.500a15.800 15.800 0 0 1 22.400 0M4 9.800a11.300 11.300 0 0 1 16 0M7.300 13a6.700 6.700 0 0 1 9.400 0"/><circle cx="12" cy="15.500" r="1.800" fill="#1b1b1b" stroke="none"/></svg>
      <svg class="ml-3 w-6 h-5" viewBox="0 0 24 20" fill="none" stroke="#1b1b1b" stroke-width="1.600" stroke-linejoin="round"><path d="M1 7h4l5.500-4.500v15L5 13H1Z"/><path d="M13.500 7q2 3 0 6M16.500 4.500q4 5.500 0 11M19.500 1.500q7 8.500 0 17" stroke-linecap="round"/></svg>
      <svg class="ml-3 w-6 h-4" viewBox="0 0 24 16" fill="none" stroke="#1b1b1b" stroke-width="1.800"><rect x="1" y="1" width="19" height="14" rx="3"/><path d="M3.500 3.500h7v9h-7ZM22 5.500h1q1 0 1 1v3q0 1-1 1h-1Z" fill="#1b1b1b" stroke="none"/></svg>
      <span class="w-[107px] text-right">9:58 PM<br>9/30/2024</span>
      <svg class="ml-[14px] w-5 h-[23px]" viewBox="0 0 20 23" fill="#003e92"><path d="M10 0c4.500 0 7.500 3 7.500 7.500V13l2.500 4v1H0v-1l2.500-4V7.500C2.500 3 5.500 0 10 0ZM6 20h8q-1 3-4 3t-4-3Z"/></svg>
    </div>
  </div>
</body>
</html>
